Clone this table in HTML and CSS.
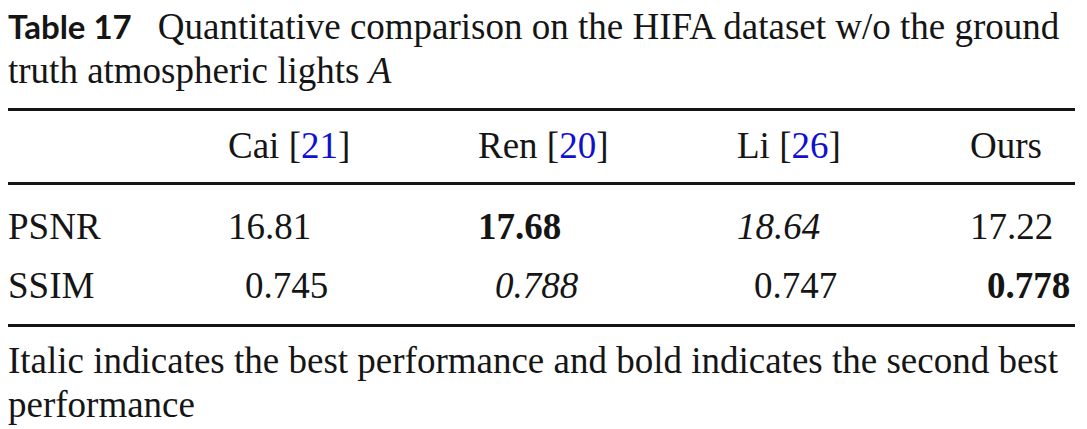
FILE: index.html
```html
<!DOCTYPE html>
<html lang="en">
<head>
  <meta charset="UTF-8" />
  <meta name="viewport" content="width=device-width, initial-scale=1.0" />
  <title>Table 17</title>
  <link rel="stylesheet" href="styles.css">
</head>
<body>
  <!-- Caption -->
  <p class="caption">
    <span class="label">Table 17</span>Quantitative comparison on the HIFA dataset w/o the ground truth atmospheric lights <i>A</i>
  </p>

  <!-- Results table -->
  <div class="results">
    <div class="row head">
      <span></span>
      <span>Cai [<span class="ref">21</span>]</span>
      <span>Ren [<span class="ref">20</span>]</span>
      <span>Li [<span class="ref">26</span>]</span>
      <span>Ours</span>
    </div>
    <div class="row first">
      <span>PSNR</span>
      <span>16.81</span>
      <span><b>17.68</b></span>
      <span><i>18.64</i></span>
      <span>17.22</span>
    </div>
    <div class="row">
      <span>SSIM</span>
      <span class="dec">0.745</span>
      <span class="dec"><i>0.788</i></span>
      <span class="dec">0.747</span>
      <span class="dec"><b>0.778</b></span>
    </div>
  </div>

  <!-- Footnote -->
  <p class="note">Italic indicates the best performance and bold indicates the second best performance</p>
</body>
</html>
```

FILE: styles.css
```css
body {
  margin: 0;
  padding: 0 12px 0 8px;
  background: #fff;
  color: #151515;
  font-family: "Liberation Serif", "Times New Roman", serif;
}

/* Caption */
.caption {
  margin: 0;
  padding-top: 5px;
  font-size: 37px;
  line-height: 44px;
}
.caption .label {
  font-family: Lato, "Liberation Sans", sans-serif;
  font-weight: 700;
  font-size: 33px;
  line-height: 1;
  margin-right: 26px;
}

/* Table */
.results {
  margin-top: 15px;
  border-top: 3px solid #151515;
  border-bottom: 3px solid #151515;
  font-size: 37px;
  line-height: 44px;
}
.row {
  display: grid;
  grid-template-columns: 220px 250px 259px 233px 1fr;
  padding-bottom: 15px;
}
.row.head {
  padding-top: 13px;
  padding-bottom: 14px;
  border-bottom: 3px solid #151515;
}
.row.first {
  padding-top: 20px;
}
.row:last-child {
  padding-bottom: 16px;
}
.ref {
  color: #1010d0;
}
.dec {
  padding-left: 17px;
}

/* Footnote */
.note {
  margin: 0;
  padding-top: 12px;
  font-size: 37px;
  line-height: 44px;
}
```
